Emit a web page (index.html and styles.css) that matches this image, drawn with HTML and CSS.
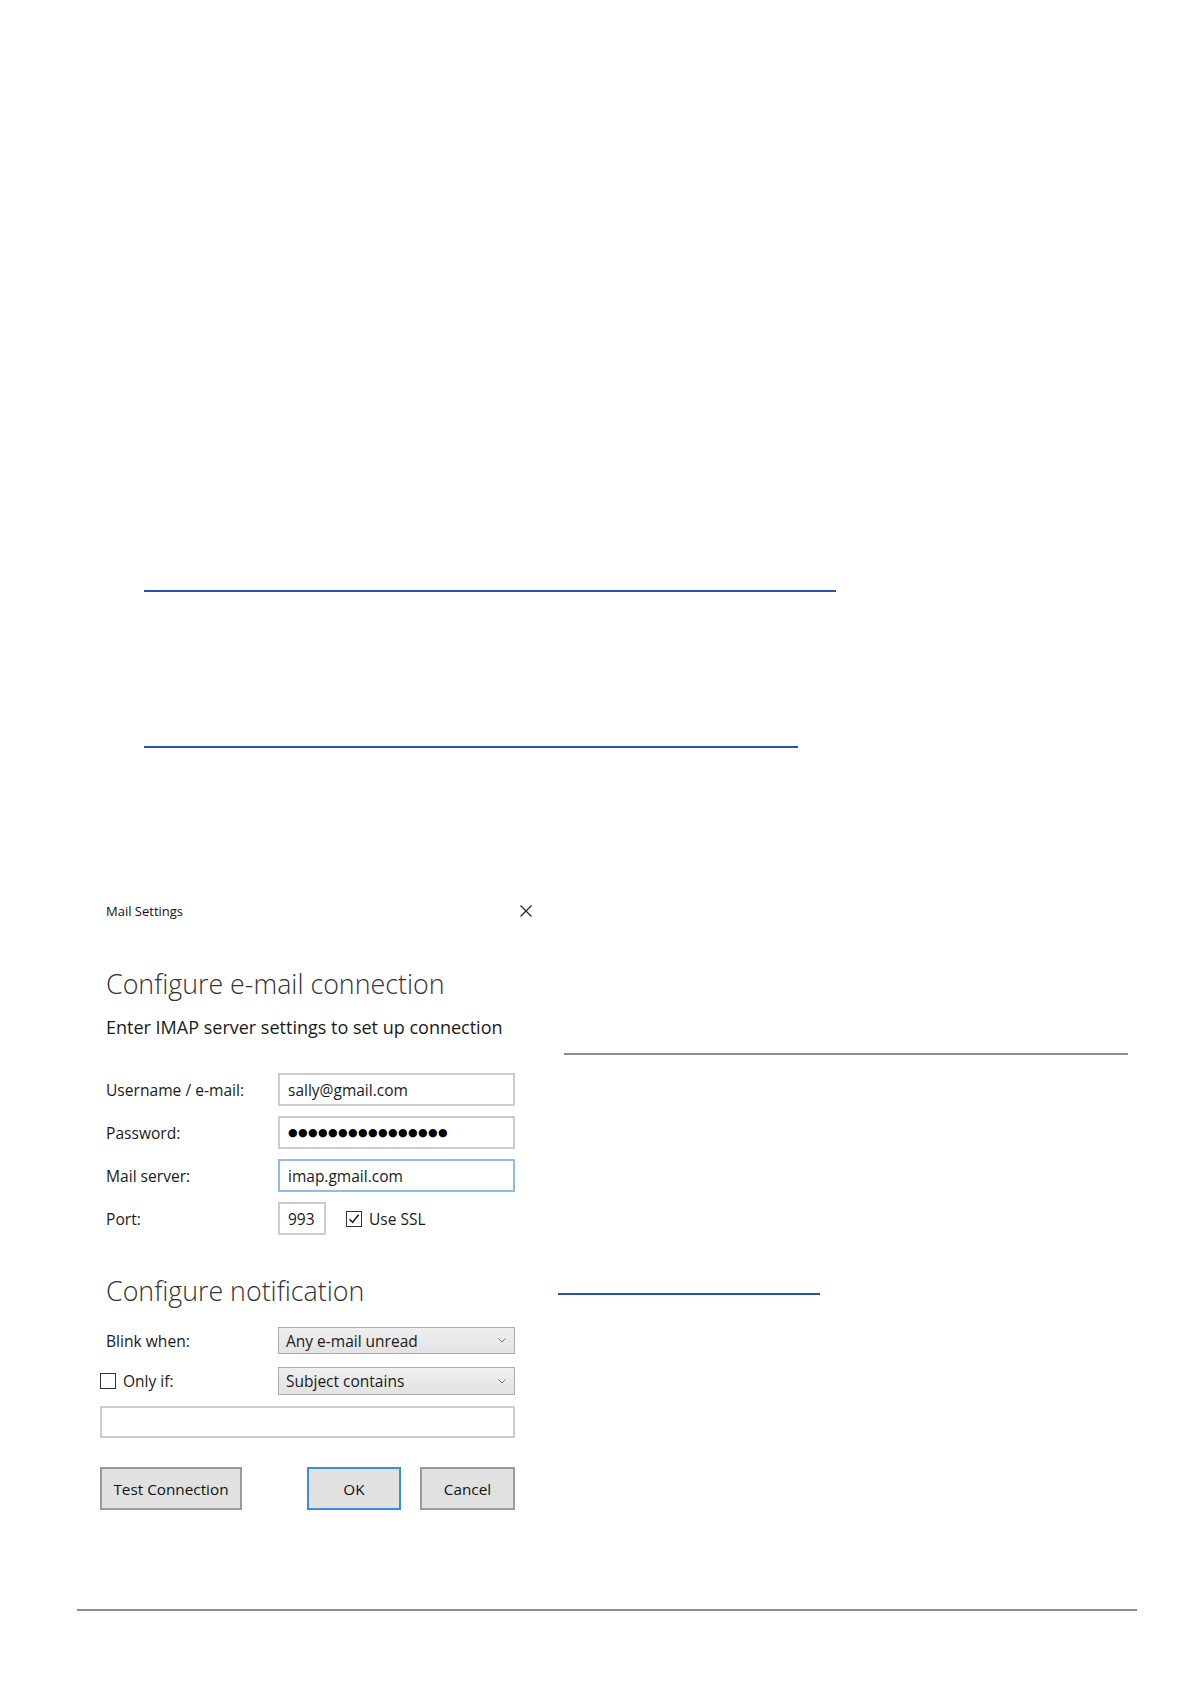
FILE: index.html
```html
<!DOCTYPE html>
<html lang="en">
<head>
  <meta charset="UTF-8" />
  <title>Mail Settings</title>
  <link rel="stylesheet" href="styles.css">
</head>
<body>

  <div class="page">

    <div class="link-line link-line-long"></div>
    <div class="link-line link-line-short"></div>

    <div class="figure">

      <div class="dialog">
        <div class="dialog-head">
          <span class="dialog-title">Mail Settings</span>
          <svg class="close" width="12" height="12" viewBox="0 0 12 12">
            <path d="M0.5 0.5 L11.5 11.5 M11.5 0.5 L0.5 11.5" stroke="#222" stroke-width="1.2" fill="none" />
          </svg>
        </div>

        <h2 class="heading heading-first">Configure e-mail connection</h2>
        <p class="subtitle">Enter IMAP server settings to set up connection</p>

        <div class="rows">
          <div class="row">
            <label class="row-label">Username / e-mail:</label>
            <div class="field">sally@gmail.com</div>
          </div>
          <div class="row">
            <label class="row-label">Password:</label>
            <div class="field field-password">&#9679;&#9679;&#9679;&#9679;&#9679;&#9679;&#9679;&#9679;&#9679;&#9679;&#9679;&#9679;&#9679;&#9679;&#9679;&#9679;</div>
          </div>
          <div class="row">
            <label class="row-label">Mail server:</label>
            <div class="field field-focus">imap.gmail.com</div>
          </div>
          <div class="row">
            <label class="row-label">Port:</label>
            <div class="field field-port">993</div>
            <span class="check check-ssl">
              <svg class="box" width="16" height="16" viewBox="0 0 16 16">
                <rect x="0.5" y="0.5" width="15" height="15" fill="#fff" stroke="#333" />
                <path d="M3.5 8.2 L6.6 11.4 L12.6 3.8" stroke="#222" stroke-width="1.6" fill="none" />
              </svg>
              Use SSL
            </span>
          </div>
        </div>

        <h2 class="heading heading-second">Configure notification</h2>

        <div class="row row-select">
          <label class="row-label">Blink when:</label>
          <div class="select">
            <span>Any e-mail unread</span>
            <svg width="8" height="5" viewBox="0 0 8 5"><path d="M0.5 0.5 L4 4 L7.5 0.5" stroke="#777" fill="none" /></svg>
          </div>
        </div>
        <div class="row row-select row-only">
          <span class="check check-only">
            <svg class="box" width="16" height="16" viewBox="0 0 16 16">
              <rect x="0.5" y="0.5" width="15" height="15" fill="#fff" stroke="#333" />
            </svg>
            Only if:
          </span>
          <div class="select select-tall">
            <span>Subject contains</span>
            <svg width="8" height="5" viewBox="0 0 8 5"><path d="M0.5 0.5 L4 4 L7.5 0.5" stroke="#777" fill="none" /></svg>
          </div>
        </div>
        <div class="field field-wide"></div>

        <div class="buttons">
          <button class="btn btn-test">Test Connection</button>
          <button class="btn btn-ok">OK</button>
          <button class="btn btn-cancel">Cancel</button>
        </div>
      </div>

      <div class="aside">
        <div class="aside-rule"></div>
        <div class="aside-link"></div>
      </div>

    </div>

    <div class="footer-rule"></div>

  </div>

</body>
</html>
```

FILE: styles.css
```css
    body {
      margin: 0;
      background-color: #fff;
      font-family: 'Open Sans', 'Noto Sans', sans-serif;
      color: #1a1a1a;
    }

    .page {
      padding-top: 590px;
      padding-bottom: 60px;
    }

    .link-line {
      height: 2px;
      background-color: #2356ab;
      margin-left: 144px;
    }

    .link-line-long {
      width: 692px;
    }

    .link-line-short {
      width: 654px;
      margin-top: 154px;
    }

    .figure {
      display: flex;
      margin-top: 148px;
    }

    .dialog {
      width: 432px;
      margin-left: 100px;
    }

    .dialog-head {
      height: 30px;
      display: flex;
      align-items: center;
      justify-content: space-between;
      padding-left: 6px;
    }

    .dialog-title {
      font-size: 13px;
      color: #111;
    }

    .heading {
      font-size: 26.8px;
      font-weight: 300;
      line-height: 36px;
      color: #333;
      margin: 0;
      padding-left: 6px;
    }

    .heading-first {
      margin-top: 40px;
    }

    .heading-second {
      margin-top: 38px;
    }

    .subtitle {
      font-size: 18px;
      line-height: 24px;
      margin: 13px 0 0;
      padding-left: 6px;
      color: #1a1a1a;
    }

    .rows {
      margin-top: 34px;
      display: flex;
      flex-direction: column;
      gap: 10px;
    }

    .row {
      display: flex;
      align-items: center;
    }

    .row-label {
      width: 172px;
      padding-left: 6px;
      font-size: 15.6px;
    }

    .field {
      box-sizing: border-box;
      width: 237px;
      height: 33px;
      border: 2px solid #cccccc;
      background-color: #fff;
      padding: 0 8px;
      display: flex;
      align-items: center;
      font-size: 15.5px;
    }

    .field-password {
      font-family: 'DejaVu Sans', sans-serif;
      font-size: 11px;
      letter-spacing: 0.4px;
      color: #000;
    }

    .field-focus {
      border-color: #8dbbea;
    }

    .field-port {
      width: 48px;
    }

    .check {
      display: flex;
      align-items: center;
      gap: 7px;
      font-size: 15.5px;
    }

    .check-ssl {
      margin-left: 20px;
    }

    .box {
      display: block;
    }

    .row-select {
      margin-top: 18px;
    }

    .row-only {
      margin-top: 13px;
    }

    .check-only {
      width: 178px;
    }

    .select {
      box-sizing: border-box;
      width: 237px;
      height: 27px;
      border: 1px solid #acacac;
      background: linear-gradient(#efefef, #e3e3e3);
      display: flex;
      align-items: center;
      justify-content: space-between;
      padding: 0 8px 0 7px;
      font-size: 15.5px;
    }

    .select-tall {
      height: 28px;
    }

    .field-wide {
      width: 415px;
      height: 32px;
      margin-top: 11px;
    }

    .buttons {
      display: flex;
      margin-top: 29px;
    }

    .btn {
      box-sizing: border-box;
      height: 43px;
      background-color: #e1e1e1;
      border: 2px solid #9a9a9a;
      font-family: 'Open Sans', 'Noto Sans', sans-serif;
      font-size: 15.3px;
      color: #111;
      padding: 0;
    }

    .btn-test {
      width: 142px;
    }

    .btn-ok {
      width: 94px;
      margin-left: 65px;
      border-color: #3a8edc;
    }

    .btn-cancel {
      width: 95px;
      margin-left: 19px;
    }

    .aside {
      margin-left: 26px;
    }

    .aside-rule {
      margin-top: 157px;
      margin-left: 6px;
      width: 564px;
      height: 2px;
      background-color: #8c8c8c;
    }

    .aside-link {
      margin-top: 238px;
      width: 262px;
      height: 2px;
      background-color: #2356ab;
    }

    .footer-rule {
      margin-top: 99px;
      margin-left: 77px;
      width: 1060px;
      height: 2px;
      background-color: #8c8c8c;
    }
```
